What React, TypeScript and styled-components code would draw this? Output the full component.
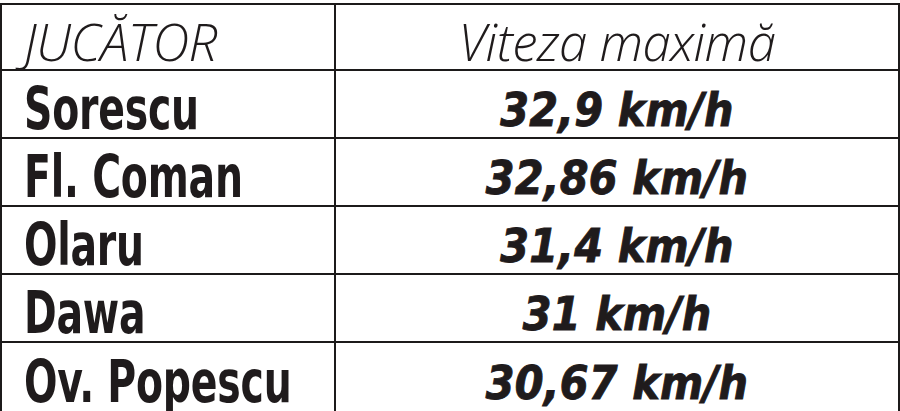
import React from 'react';
import styled, { createGlobalStyle } from 'styled-components';

const GlobalStyle = createGlobalStyle`
  html, body {
    margin: 0;
    padding: 0;
    background: #ffffff;
  }
  body {
    width: 900px;
    height: 411px;
    overflow: hidden;
  }
`;

const ink = '#1f1b1c';
const rule = '#1c1a1a';

const Table = styled.div`
  margin-top: 3px;
  width: 900px;
  box-sizing: border-box;
  border-top: 2px solid ${rule};
  border-left: 2px solid ${rule};
  border-right: 2px solid ${rule};
  display: grid;
  grid-template-columns: 334px 1fr;
  color: ${ink};
  font-family: "DejaVu Sans Condensed", "Liberation Sans", sans-serif;
`;

const Cell = styled.div<{ $head?: boolean; $right?: boolean }>`
  box-sizing: border-box;
  height: ${(p) => (p.$head ? 66 : 68)}px;
  border-bottom: 2px solid ${rule};
  border-right: ${(p) => (p.$right ? 'none' : `2px solid ${rule}`)};
  display: flex;
  align-items: center;
  justify-content: ${(p) => (p.$right ? 'center' : 'flex-start')};
  padding-left: ${(p) => (p.$right ? 0 : 22)}px;
  padding-top: ${(p) => (p.$head ? 7 : 10)}px;
  white-space: nowrap;
  overflow: visible;

  &:nth-last-child(-n + 2) {
    border-bottom: none;
  }
`;

const HeadText = styled.span`
  font-family: "Open Sans", "DejaVu Sans Condensed", sans-serif;
  font-size: 51px;
  font-style: italic;
  font-weight: 300;
  letter-spacing: -0.5px;
`;

/* no condensed face is installed, so squeeze the bold a little */
const Name = styled.span`
  display: inline-block;
  font-size: 58px;
  font-weight: 700;
  letter-spacing: -0.3px;
  transform: scaleX(0.755);
  transform-origin: left center;
`;

const Speed = styled.span`
  display: inline-block;
  font-size: 46px;
  font-weight: 700;
  font-style: italic;
  letter-spacing: 0.2px;
  -webkit-text-stroke: 0.9px ${ink};
  position: relative;
  top: 1px;
`;

const rows = [
  { name: 'Sorescu', speed: '32,9 km/h' },
  { name: 'Fl. Coman', speed: '32,86 km/h' },
  { name: 'Olaru', speed: '31,4 km/h' },
  { name: 'Dawa', speed: '31 km/h' },
  { name: 'Ov. Popescu', speed: '30,67 km/h' },
];

export default function App() {
  return (
    <>
      <GlobalStyle />
      <Table>
        <Cell $head>
          <HeadText>JUCĂTOR</HeadText>
        </Cell>
        <Cell $head $right>
          <HeadText>Viteza maximă</HeadText>
        </Cell>
        {rows.map((r) => (
          <React.Fragment key={r.name}>
            <Cell>
              <Name>{r.name}</Name>
            </Cell>
            <Cell $right>
              <Speed>{r.speed}</Speed>
            </Cell>
          </React.Fragment>
        ))}
      </Table>
    </>
  );
}
